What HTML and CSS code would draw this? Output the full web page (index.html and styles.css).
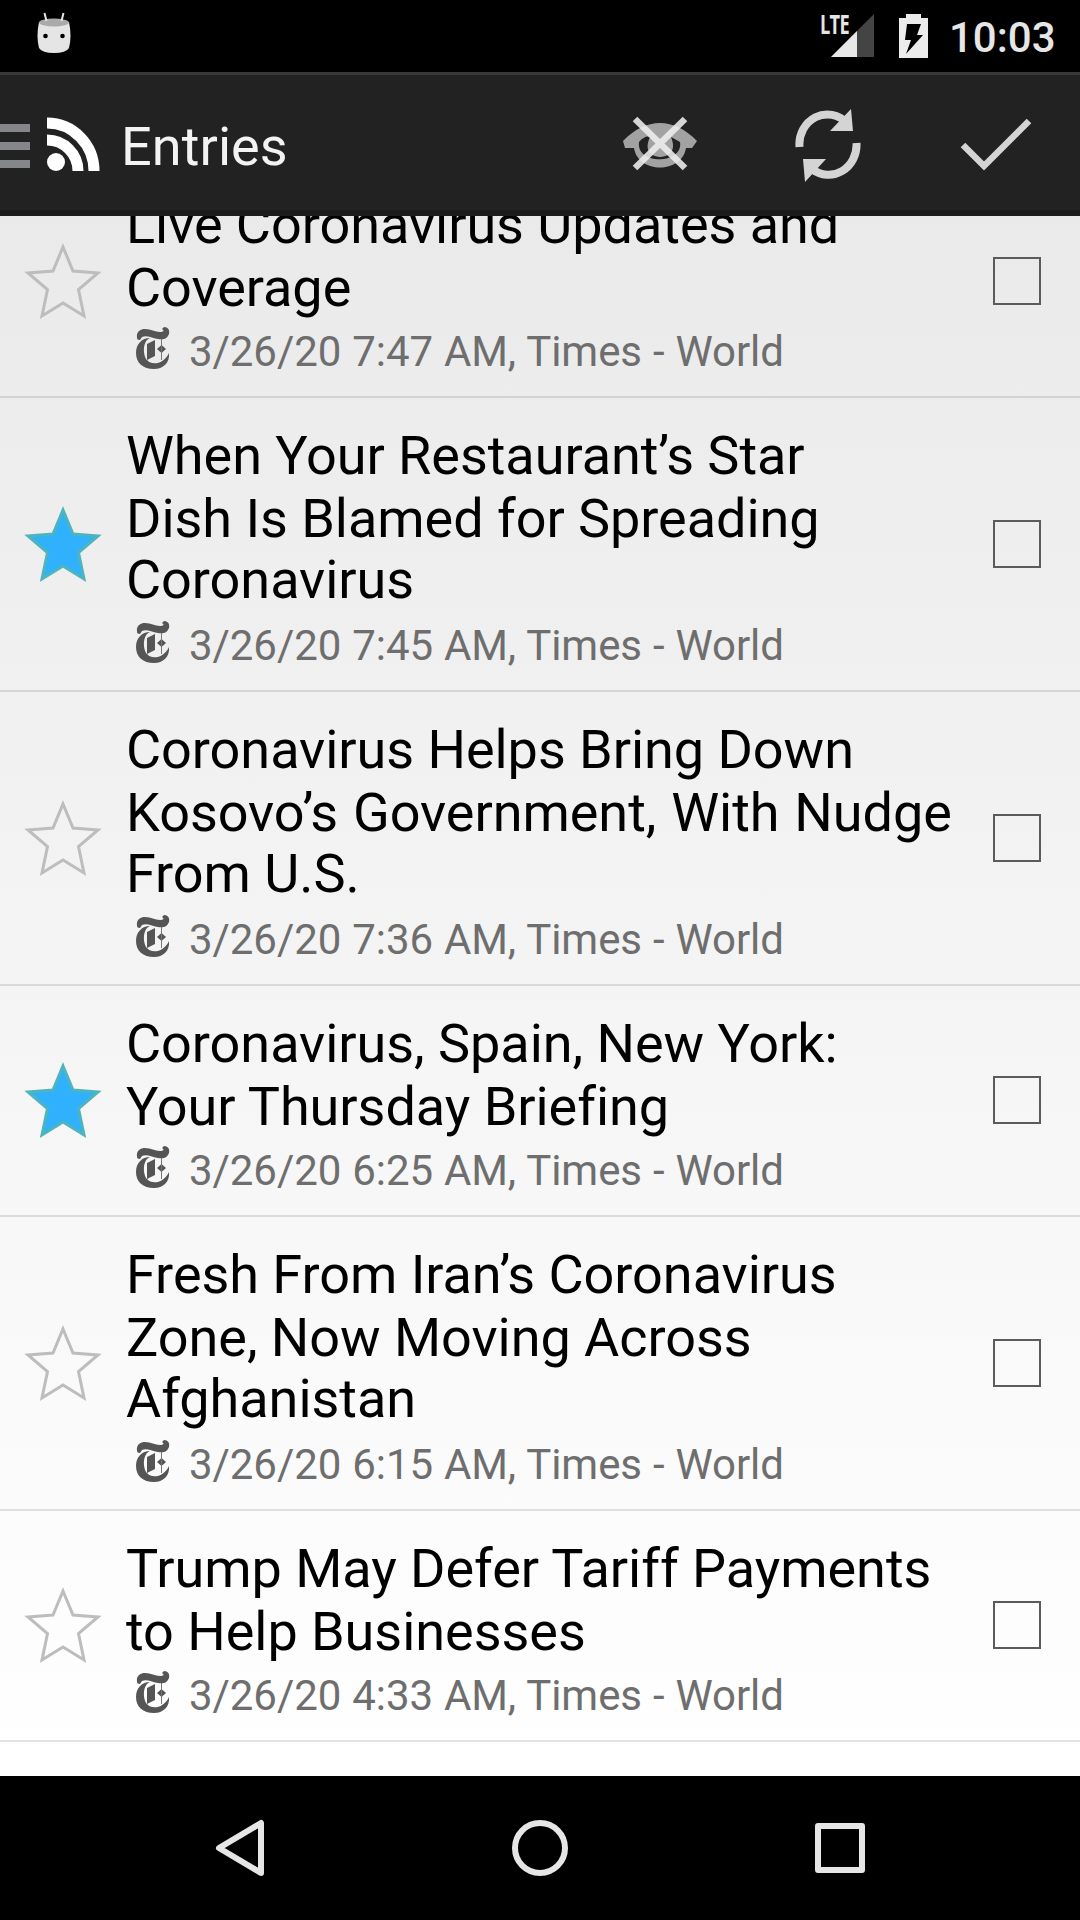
FILE: index.html
```html
<!DOCTYPE html>
<html lang="en"><head><meta charset="utf-8"><title>Entries</title><link rel="stylesheet" href="styles.css"></head>
<body>
<svg class="defs" width="0" height="0">
<symbol id="star" viewBox="0 0 80 78"><path d="M39 5L49 29L74 31L54.500 47.500L60 74L39 61L18 74L23.500 47.500L4 31L29 29Z"/></symbol>
<symbol id="times" viewBox="0 0 34 42"><path fill="#555" d="M1 11C0 4 5 2 9 2C15 2 19 5 24 5C27 5 29 4 26 2L28 0C32 0 34 3 33 7C31 12 27 13 22 12C15 11 11 8 6 10L4 13C2 13 1 12 1 11ZM14 11C6 14 7 29 11 33C16 39 28 37 33 26C34 36 27 42 18 42C7 42 0 36 0 26C0 17 6 11 14 11ZM11 17L19 13L19 29L11 33ZM21 22L25.500 18L30 22L25.500 26Z"/><path stroke="#777" stroke-width="1" d="M25.500 12V33"/></symbol>
</svg>
<div class="screen">
<header class="status">
<svg class="android" width="36" height="42" viewBox="0 0 36 42"><path d="M3 10Q18 14 33 10Q36 24 33 36Q30 41 18 41Q6 41 3 36Q0 24 3 10Z" fill="#e5e5e5"/><ellipse cx="18" cy="10.500" rx="15" ry="4" fill="#aaa"/><path d="M8.500 1L10.500 9M27.500 1L25.500 9" stroke="#e5e5e5" stroke-width="2"/><circle cx="9.500" cy="24" r="2.300"/><circle cx="26.500" cy="24" r="2.300"/></svg>
<span class="lte">LTE</span>
<svg class="signal" width="43" height="43" viewBox="0 0 43 43"><path d="M43 0V43H0Z" fill="#444"/><path d="M26 17V43H0Z" fill="#e8e8e8"/></svg>
<svg class="battery" width="29" height="44" viewBox="0 0 29 44"><path d="M0 4H7V0H22V4H29V44H0Z" fill="#ececec"/><path d="M8 10H22L18 21H24L7 40L12 26H6Z"/></svg>
<time>10:03</time>
</header>
<div class="bar">
<svg class="drawer" width="30" height="44" viewBox="0 0 30 44" fill="#85868a"><path d="M0 0H30V8H0ZM0 18H30V26H0ZM0 36H30V44H0Z"/></svg>
<svg class="rss" width="53" height="54" viewBox="0 0 53 54"><g fill="none" stroke="#fff" stroke-width="11"><path d="M0 6A47 48 0 0 1 47 54M0 23A31 31 0 0 1 31 54"/></g><circle cx="9" cy="45" r="9" fill="#fff"/></svg>
<h1>Entries</h1>
<svg class="eye" width="76" height="56" viewBox="0 0 76 56"><path d="M1 25C24 1 52 1 75 25L70 32H64C60 58 16 58 12 32H3Z" fill="#a2a2a2"/><path d="M17 26C22 20 27 20 28 21C20 38 34 41 38 41C43 41 56 38 49 21L58 26C62 48 14 50 17 26Z" fill="#222"/><path d="M13 3L63 52M63 3L13 52" stroke="#eee" stroke-opacity=".88" stroke-width="6.500"/></svg>
<svg class="refresh" width="66" height="73" viewBox="0 0 66 73"><path d="M4.500 38A28 30 0 0 1 52 14M61.500 34A28 30 0 0 1 17 60" fill="none" stroke="#d4d4d4" stroke-width="8"/><path d="M56 0L58 22H35ZM10 73L8 50H31Z" fill="#d4d4d4"/></svg>
<svg class="check" width="72" height="54" viewBox="0 0 72 54"><path d="M3 28L24 49L69 4" fill="none" stroke="#d4d4d4" stroke-width="6.500"/></svg>
</div>
<main class="list">
<article class="row two first"><svg class="star"><use href="#star"/></svg><div class="copy"><h2><span>Live Coronavirus Updates and</span><span>Coverage</span></h2><p><svg><use href="#times"/></svg>3/26/20 7:47 AM, Times - World</p></div><i class="box"></i></article>
<article class="row"><svg class="star on"><use href="#star"/></svg><div class="copy"><h2><span>When Your Restaurant’s Star</span><span>Dish Is Blamed for Spreading</span><span>Coronavirus</span></h2><p><svg><use href="#times"/></svg>3/26/20 7:45 AM, Times - World</p></div><i class="box"></i></article>
<article class="row"><svg class="star"><use href="#star"/></svg><div class="copy"><h2><span>Coronavirus Helps Bring Down</span><span class="loose">Kosovo’s Government, With Nudge</span><span>From U.S.</span></h2><p><svg><use href="#times"/></svg>3/26/20 7:36 AM, Times - World</p></div><i class="box"></i></article>
<article class="row two"><svg class="star on"><use href="#star"/></svg><div class="copy"><h2><span>Coronavirus, Spain, New York:</span><span>Your Thursday Briefing</span></h2><p><svg><use href="#times"/></svg>3/26/20 6:25 AM, Times - World</p></div><i class="box"></i></article>
<article class="row"><svg class="star"><use href="#star"/></svg><div class="copy"><h2><span>Fresh From Iran’s Coronavirus</span><span>Zone, Now Moving Across</span><span>Afghanistan</span></h2><p><svg><use href="#times"/></svg>3/26/20 6:15 AM, Times - World</p></div><i class="box"></i></article>
<article class="row two"><svg class="star"><use href="#star"/></svg><div class="copy"><h2><span>Trump May Defer Tariff Payments</span><span>to Help Businesses</span></h2><p><svg><use href="#times"/></svg>3/26/20 4:33 AM, Times - World</p></div><i class="box"></i></article>
</main>
<nav class="nav">
<svg width="58" height="58" viewBox="0 0 58 58"><path d="M50 4V54L8 29Z"/></svg>
<svg width="58" height="58" viewBox="0 0 58 58"><circle cx="29" cy="29" r="25"/></svg>
<svg width="58" height="58" viewBox="0 0 58 58"><rect x="7" y="7" width="44" height="44"/></svg>
</nav>
</div>
</body></html>
```
FILE: styles.css
```css
* { box-sizing: border-box; }
body { margin: 0; font-family: Roboto, sans-serif; }
svg { display: block; flex: none; }
.defs { position: absolute; }
.screen { width: 1080px; height: 1920px; display: flex; flex-direction: column; overflow: hidden; background: #000; }
.status { height: 72px; display: flex; align-items: flex-start; padding-left: 36px; flex: none; color: #e6e6e6; }
.android { margin-top: 12px; }
.lte { margin: 11px 0 0 748px; width: 28px; font: 700 26px/26px "Open Sans", sans-serif; transform: scaleX(.7); transform-origin: left; letter-spacing: -1px; }
.signal { margin: 14px 0 0 -17px; }
.battery { margin: 14px 0 0 25px; }
time { margin: 13px 0 0 21px; font-size: 42px; line-height: 50px; font-weight: 500; }
.bar { height: 144px; flex: none; display: flex; align-items: flex-start; background: #222; border-top: 3px solid #383838; border-bottom: 6px solid #1b1b1b; }
.drawer { margin-top: 49px; }
.rss { margin: 42px 0 0 17px; }
h1 { margin: 40px 0 0 21px; width: 501px; color: #f3f3f3; font-size: 54px; line-height: 63px; font-weight: 400; letter-spacing: .1px; }
.eye { margin-top: 41px; }
.refresh { margin: 34px 0 0 97px; }
.check { margin: 42px 0 0 99px; }
.list { flex: 1; min-height: 0; overflow: hidden; background: linear-gradient(#eaeaea, #fff); }
.row { height: 294px; display: flex; align-items: center; padding-left: 24px; border-bottom: 2px solid rgba(0, 0, 0, .11); }
.row.two { height: 231px; }
.row.first { margin-top: -49px; }
.star { width: 80px; height: 78px; fill: none; stroke: #bdbdbd; stroke-width: 3px; }
.two .star, .two .box { margin-bottom: 2px; }
.star.on { fill: #30b1fe; stroke: #4eb4bd; }
.copy { width: 865px; padding-left: 22px; align-self: flex-start; padding-top: 26px; }
h2 { margin: 0; font-size: 54px; line-height: 63px; font-weight: 400; color: #000; white-space: nowrap; letter-spacing: -.04px; }
h2 span { display: block; }
h2 span:nth-child(3) { margin-top: -2px; }
h2 .loose { word-spacing: 1.5px; }
.copy p { display: flex; margin: 10px 0 0; padding-left: 10px; font-size: 42px; line-height: 50px; color: #6e6e6e; white-space: nowrap; word-spacing: .6px; letter-spacing: -.06px; }
.two .copy p { margin-top: 8px; }
.copy p svg { width: 34px; height: 42px; margin-right: 19px; }
.box { width: 48px; height: 48px; margin-left: 24px; border: 2px solid #5b5b5b; flex: none; }
.nav { height: 144px; flex: none; display: flex; justify-content: space-between; align-items: center; padding: 0 211px; background: #000; }
.nav svg { fill: none; stroke: #e6e6e6; stroke-width: 6px; stroke-linejoin: round; }
```
